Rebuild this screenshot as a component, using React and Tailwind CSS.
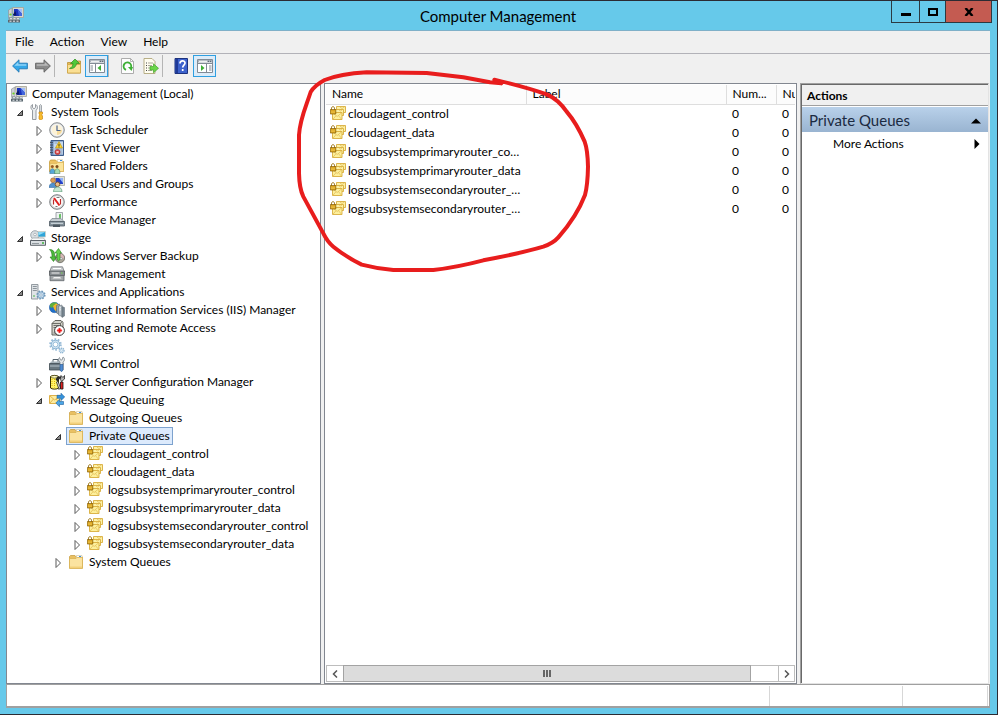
import { useState } from "react";

const Svg = ({ children }) => (
  <svg viewBox="0 0 16 16" className="size-4 shrink-0" aria-hidden="true">
    {children}
  </svg>
);

const ComputerIcon = () => (
  <Svg>
    <path d="M4.5 0.5h11v10h-10z" fill="#d9d8cf" stroke="#a3a196" strokeWidth="0.8" />
    <path d="M6 2h8v7H6z" fill="#1a32bd" />
    <path d="M9.500 2H14v5z" fill="#a3bdf6" />
    <path d="M14 7v2h-3L9.500 2z" fill="#4467dc" />
    <path d="M0.500 3l3.500-2v9.500H0.500z" fill="#cdd0d3" stroke="#898f94" strokeWidth="0.6" />
    <circle cx="2.500" cy="7.500" r="1.100" fill="#6cd21f" />
    <path d="M5 7.500L7.500 4l1 4.500H5z" fill="#0d1a66" />
    <path d="M0.500 10.500h11V13H0.500z" fill="#8d979d" />
    <path d="M0 13h12v2.500H0z" fill="#59666e" />
    <path d="M2 11.700h2M5.500 11.700h2M9 11.700h2M1.500 14.200h2M5 14.200h2M8.500 14.200h2" stroke="#e8edef" />
  </Svg>
);

const ToolsIcon = () => (
  <Svg>
    <path d="M2.500 0.500v3L4 4.800l1.500-1.300v-3C8 1.500 8 5 6 6.200V15.500H2.500V6.200C0.500 5 0.300 1.500 2.500.5z" fill="#e9ecee" stroke="#8b9197" strokeWidth="0.9" />
    <path d="M10.500 0.500l1 1V8h-2V1.500z" fill="#d5d9dc" stroke="#838a8f" strokeWidth="0.7" />
    <path d="M9 8h3.500v2l-1 .8 1 .9V15l-1 .8H10L9 15v-3.300l1-.9-1-.8z" fill="#f8bc2c" stroke="#c27c09" strokeWidth="0.6" />
  </Svg>
);

const ClockIcon = () => (
  <Svg>
    <circle cx="8" cy="8" r="7.300" fill="#d9dbdd" stroke="#7f8386" strokeWidth="0.9" />
    <circle cx="8" cy="8" r="5.700" fill="#fdf3d8" stroke="#f7f7f7" strokeWidth="0.8" />
    <path d="M8 8h5A5 5 0 0 1 8 13z" fill="#f7dc9c" />
    <path d="M8 3.500v5h3.500" fill="none" stroke="#4d6690" strokeWidth="1.200" />
  </Svg>
);

const EventIcon = () => (
  <Svg>
    <path d="M2 0.500h12.500v15H2z" fill="#6488b8" stroke="#3d5c8b" />
    <path d="M4.500 1.500H14v13H4.500z" fill="#c6d9ef" />
    <path d="M1 2.500h3M1 5h3M1 7.500h3M1 10h3M1 12.500h3" stroke="#434d5c" strokeWidth="0.9" />
    <path d="M5.500 9h8M5.500 11h8M5.500 13h8M5.500 3h3" stroke="#6d89ac" strokeWidth="0.7" />
    <path d="M10 1.500L13.500 8h-7z" fill="#ffd52e" stroke="#b88b00" strokeWidth="0.6" />
    <path d="M10 3.800v2.400M10 6.600v.8" stroke="#222" strokeWidth="0.9" />
    <circle cx="8.500" cy="12" r="2.600" fill="#d64545" stroke="#9c2424" strokeWidth="0.5" />
    <path d="M7.400 10.900l2.200 2.200M9.600 10.900l-2.200 2.200" stroke="#fff" strokeWidth="0.8" />
  </Svg>
);

const SharedIcon = () => (
  <Svg>
    <path d="M0.500 3.500L1.500 2h5L8 3.500h6.500v10h-14z" fill="#eec262" stroke="#c49a37" strokeWidth="0.8" />
    <path d="M8.500 1.500h5v2.500h-5z" fill="#fff" stroke="#c2b584" strokeWidth="0.4" />
    <path d="M11 2.500h2" stroke="#3c8fe0" />
    <path d="M1 5.500h7l1-1h5.500v9H1z" fill="#fbe49b" stroke="#dcb65c" strokeWidth="0.7" />
    <circle cx="3.300" cy="8.500" r="1.500" fill="#9a5a22" />
    <circle cx="8" cy="8.500" r="1.500" fill="#7a4a1a" />
    <path d="M0.700 15.500c0-6.500 5.500-6.500 5.500 0z" fill="#57a8d8" stroke="#31688d" strokeWidth="0.5" />
    <path d="M5.500 15.500c0-6.500 5.500-6.500 5.500 0z" fill="#a5dbb1" stroke="#3d7a4f" strokeWidth="0.5" />
  </Svg>
);

const UsersIcon = () => (
  <Svg>
    <path d="M5 0.500h10.500v9H6z" fill="#e2e2da" stroke="#9e9f98" strokeWidth="0.7" />
    <path d="M6.500 2H14v6H6.500z" fill="#2440c8" />
    <path d="M10 2h4v5z" fill="#94b3f5" />
    <circle cx="4" cy="4.300" r="2.400" fill="#dc9c54" stroke="#95602c" strokeWidth="0.6" />
    <path d="M0 11.500c0-6 8-6 8 0z" fill="#4f91d0" stroke="#2f6092" strokeWidth="0.5" />
    <circle cx="8.500" cy="8.300" r="2.300" fill="#e8bd85" stroke="#74471d" strokeWidth="0.8" />
    <path d="M4.500 15.800c0-6.500 8.500-6.500 8.500 0z" fill="#c5e5d1" stroke="#5a9a76" strokeWidth="0.7" />
  </Svg>
);

const PerformanceIcon = () => (
  <Svg>
    <circle cx="8" cy="8" r="7.300" fill="#d5d6d7" stroke="#6f7376" strokeWidth="0.9" />
    <circle cx="8" cy="8" r="5.800" fill="#fff" />
    <path d="M4.500 10.500V5.500M11.500 10.500V5" stroke="#b92a2a" strokeWidth="1.200" />
    <path d="M5 4l5.500 7.500" stroke="#e02020" strokeWidth="2" />
    <path d="M7.500 3.500h3M6.500 12.500h2" stroke="#555" strokeWidth="0.8" />
  </Svg>
);

const DeviceIcon = () => (
  <Svg>
    <path d="M7 0.500h6.500v7H7z" fill="#eef1f2" stroke="#8b9398" strokeWidth="0.8" />
    <path d="M10 2.500l1.800-.8v4l-1.500 1" fill="#4cb749" />
    <path d="M3 6.500h9l3 3H0.500z" fill="#c3cbd0" stroke="#78828a" strokeWidth="0.7" />
    <path d="M0.500 9.500h15V14H0.500z" fill="#83919a" stroke="#505c65" strokeWidth="0.8" />
    <path d="M2 11.300h12" stroke="#d6dfe4" />
    <path d="M4 12.500h7V15H4z" fill="#4c5861" />
  </Svg>
);

const StorageIcon = () => (
  <Svg>
    <circle cx="5" cy="5" r="4.300" fill="#d9dfe3" stroke="#8d979e" strokeWidth="0.8" />
    <circle cx="5" cy="4.500" r="1.300" fill="#fff" stroke="#8d979e" strokeWidth="0.6" />
    <path d="M8 1.500h7.500V7H8z" fill="#2fa4d8" stroke="#d0d0c8" strokeWidth="0.8" />
    <path d="M8.500 2l6.500.2-6.500 3z" fill="#8fdcf7" />
    <path d="M2.500 8h11l2 2.500H0.500z" fill="#f8f9fa" stroke="#8c9398" strokeWidth="0.6" />
    <path d="M0.500 10.500h15v4.800H0.500z" fill="#dadfe2" stroke="#4f565c" strokeWidth="0.9" />
    <path d="M2 13.500h7" stroke="#7d878d" strokeWidth="0.8" />
    <path d="M12 13h2" stroke="#3bb33b" strokeWidth="1.300" />
  </Svg>
);

const BackupIcon = () => (
  <Svg>
    <circle cx="11" cy="10" r="4.700" fill="#a9a598" stroke="#686860" strokeWidth="0.8" />
    <path d="M11 5.500a4.500 4.500 0 0 1 4 5l-4-.5z" fill="#d8b5b6" />
    <circle cx="12" cy="10.500" r="1.200" fill="#eee" stroke="#777" strokeWidth="0.5" />
    <path d="M0.500 1.500C4 1.500 5.500 3.500 5.500 6v3h2L4.500 13.500 1 9h2c0-3 0-5-2.500-7.500z" fill="#4cba3c" stroke="#267a1c" strokeWidth="0.6" />
    <path d="M6 5l3.500-4.500L12.500 5H11v4c0 2 0 3-1.500 4C8 12 8 11 8 9V5z" fill="#66d44e" stroke="#267a1c" strokeWidth="0.6" />
  </Svg>
);

const DiskIcon = () => (
  <Svg>
    <path d="M2.500 0.800h11L15.500 6H0.500z" fill="#c9cccf" stroke="#75797c" strokeWidth="0.8" />
    <path d="M4 2.500h8" stroke="#fff" />
    <path d="M0.500 5h15v4.500H0.500z" fill="#868b8f" stroke="#54595c" strokeWidth="0.8" />
    <path d="M2.500 7h8" stroke="#eee" />
    <path d="M12 7h1.500" stroke="#73d94f" />
    <path d="M1 9.500h14v5.200H1z" fill="#a0a4a7" stroke="#606569" strokeWidth="0.8" />
    <path d="M3.500 12.500L5 11h6l1.500 1.500z" fill="#f2f2f2" />
  </Svg>
);

const ServicesAppsIcon = () => (
  <Svg>
    <path d="M1.500 0.500h6.500V15H1.500z" fill="#dfe3e6" stroke="#8a9299" strokeWidth="0.9" />
    <path d="M2.800 2.500h4M2.800 4.500h4M2.800 6.500h4" stroke="#8b949b" />
    <path d="M3 12h2" stroke="#48b848" />
    <circle cx="11" cy="11" r="3.800" fill="#b4d0e6" stroke="#6d94b5" strokeWidth="1.600" strokeDasharray="1.600 1.380" />
    <circle cx="11" cy="11" r="3" fill="#c7ddee" stroke="#7fa6c6" strokeWidth="0.8" />
    <circle cx="11" cy="11" r="1.200" fill="#fff" stroke="#6d94b5" strokeWidth="0.6" />
  </Svg>
);

const IisIcon = () => (
  <Svg>
    <circle cx="5.500" cy="5.500" r="5.200" fill="#1f6fca" stroke="#275c9d" strokeWidth="0.5" />
    <path d="M1 2.500C3 0 6 .3 8 .8L7 3.500 4.500 4 3 6 1 5z" fill="#5fae3a" />
    <path d="M4 4l3-2.500 3 1L8.500 5 7 9.500 5 7z" fill="#f0b429" />
    <path d="M7.500 3.500l3-1.500v10.500l-3-1.500z" fill="#9aa6b0" stroke="#59646e" strokeWidth="0.6" />
    <path d="M9.500 4l3.500-1v11.500L9.500 13z" fill="#b6c1c9" stroke="#6b757d" strokeWidth="0.6" />
    <path d="M13 4.500l2.500 1V14L13 15.500z" fill="#76848f" stroke="#5a656e" strokeWidth="0.5" />
    <path d="M10.300 6l1.700-.3M10.300 8l1.700-.2" stroke="#fff" strokeWidth="0.8" />
  </Svg>
);

const RoutingIcon = () => (
  <Svg>
    <path d="M3 3.500l3-3h6l2 2v6.500l-4 6H3z" fill="#d4d4cc" stroke="#55554f" strokeWidth="0.9" />
    <path d="M3 3.500h8.500L13.500 1M11.500 3.500V7" fill="none" stroke="#55554f" strokeWidth="0.8" />
    <path d="M4.500 5.500h5M4.500 7.500h3M4.500 13h2" stroke="#555" strokeWidth="0.8" />
    <circle cx="10.500" cy="10.500" r="4.900" fill="#fff" stroke="#222" strokeWidth="0.9" />
    <path d="M9.800 8.300h1.400v1.500h1.500v1.400h-1.500v1.500H9.800v-1.500H8.300V9.800h1.500z" fill="#f01414" stroke="#f01414" strokeWidth="0.5" />
  </Svg>
);

const ServicesIcon = () => (
  <Svg>
    <circle cx="6.500" cy="6.500" r="5.300" fill="none" stroke="#9bbdd8" strokeWidth="2" strokeDasharray="1.700 1.630" />
    <circle cx="6.500" cy="6.500" r="4.300" fill="#d5e7f4" stroke="#87b2d2" />
    <circle cx="6.500" cy="6.500" r="2.400" fill="#fff" stroke="#87b2d2" strokeWidth="0.8" />
    <circle cx="12.700" cy="12.500" r="2.300" fill="#e0edf7" stroke="#8fb5d2" strokeWidth="1.400" strokeDasharray="1.200 0.600" />
    <circle cx="12.700" cy="12.500" r="0.9" fill="#fff" stroke="#87b2d2" strokeWidth="0.5" />
  </Svg>
);

const WmiIcon = () => (
  <Svg>
    <path d="M4 6V3.500h5V6" fill="none" stroke="#52606b" />
    <path d="M2 5.500h11l2 2.500H0.500z" fill="#a7b3bb" />
    <path d="M0.500 7.500H14V14H0.500z" fill="#697780" stroke="#3f4a52" strokeWidth="0.8" />
    <path d="M1 10h12" stroke="#b9c5cc" />
    <path d="M10.500 1.500l1 2.500H13l1-3C16 2 16 5 14 6v3h-3V6c-2-1-2-3-.5-4.500z" fill="#e3e7ea" stroke="#717b82" strokeWidth="0.7" />
    <path d="M11 8.500h3V14l-1.500 1.800L11 14z" fill="#4f8bd0" stroke="#2b5a93" strokeWidth="0.6" />
  </Svg>
);

const SqlIcon = () => (
  <Svg>
    <path d="M1.500 2.500C3 1 8 1 9.500 2.500V14c-1 1.500-7 1.500-8 0z" fill="#fff46b" stroke="#3a3200" />
    <ellipse cx="5.500" cy="2.800" rx="3.600" ry="1.300" fill="#fffbc4" stroke="#3a3200" strokeWidth="0.6" />
    <path d="M3 5v8.500M5.500 5v8.500" stroke="#e0b400" strokeDasharray="1 1" />
    <path d="M6.500 5.500l2-3h4v2H11L8.500 7.500z" fill="#2a2a2a" />
    <path d="M12 1.500l2 2 1.500-2V5l-3 2.500-1-2z" fill="#b5b5b5" stroke="#111" strokeWidth="0.7" />
    <path d="M7.500 8L9 7l2.500 7-1.500 1.500z" fill="#ddd" stroke="#111" strokeWidth="0.7" />
    <path d="M11.500 8H14v7h-2.500z" fill="#e02020" stroke="#111" strokeWidth="0.8" />
  </Svg>
);

const MessageIcon = () => (
  <Svg>
    <path d="M0.500 3.500h10.500v8H0.500z" fill="#fdeca0" stroke="#dba93a" strokeWidth="0.9" />
    <path d="M1 4l4.700 4L10.500 4M1 11l3.500-4M10.500 11L7 7" fill="none" stroke="#dba93a" strokeWidth="0.8" />
    <path d="M8 3.300h4V1.200L15.700 5 12 8.500V6.300H8z" fill="#3593dc" stroke="#1c5f9d" strokeWidth="0.6" />
    <path d="M14.500 9.500h-4V7.300L6.800 11l3.700 3.700v-2.200h4z" fill="#4aa5e6" stroke="#1c5f9d" strokeWidth="0.6" />
  </Svg>
);

const FolderIcon = () => (
  <Svg>
    <path d="M1.500 2.500l1-1h4.500L8 3h6.500v11h-13z" fill="#e9c062" stroke="#c9a047" strokeWidth="0.8" />
    <path d="M8.500 1.500H14v3H8.500z" fill="#fff" stroke="#c2b584" strokeWidth="0.5" />
    <path d="M11 2.500h2" stroke="#3c8fe0" />
    <path d="M1.500 4.500H8l1-1h5.500v11h-13z" fill="#fbe3a0" stroke="#d9b254" strokeWidth="0.8" />
    <path d="M2 12.500h12V14H2z" fill="#f3d07a" />
  </Svg>
);

const QueueIcon = () => (
  <Svg>
    <path d="M6.500 0.500h9v6h-9z" fill="#fdf2a6" stroke="#d8ad3c" strokeWidth="0.9" />
    <path d="M4.500 3.500h9v6h-9z" fill="#fdf2a6" stroke="#d8ad3c" strokeWidth="0.9" />
    <path d="M2.500 6.500H12v7H2.500z" fill="#fdf09c" stroke="#d8ad3c" strokeWidth="0.9" />
    <path d="M3 7l4.200 3.500L11.500 7M3 13.200l3-3.500M11.500 13.200l-3-3.500M8.500 3.500l2 1.500 2-1.500M10 1l2 1.500L14.500 1" fill="none" stroke="#dfb850" strokeWidth="0.7" />
    <path d="M1.500 4V2.200c0-2 3-2 3 0V4" fill="none" stroke="#9c7413" />
    <path d="M0.300 3.500h5.500V8H0.300z" fill="#d49c16" stroke="#85600b" strokeWidth="0.7" />
    <path d="M1 5.200h4M1 6.700h4" stroke="#f8d560" strokeWidth="0.6" />
  </Svg>
);

const BackIcon = () => (
  <Svg>
    <path d="M0.600 8L7 1.800v3.400h8.400v5.600H7v3.400z" fill="#33a7e8" stroke="#2478b4" strokeWidth="0.9" strokeLinejoin="round" />
    <path d="M2.300 7.700l4-3.800v2.300h8v1.500z" fill="#8ed4f7" />
  </Svg>
);

const ForwardIcon = () => (
  <Svg>
    <path d="M15.400 8L9 1.800v3.400H0.600v5.600H9v3.400z" fill="#8a8a8a" stroke="#606060" strokeWidth="0.9" strokeLinejoin="round" />
    <path d="M13.700 7.700l-4-3.800v2.300h-8v1.500z" fill="#b9b9b9" />
  </Svg>
);

const UpFolderIcon = () => (
  <Svg>
    <path d="M1.500 4.500h5l1-1.500h7v12h-13z" fill="#e8bd58" stroke="#b98f35" strokeWidth="0.8" />
    <path d="M1.500 6.500h13V15h-13z" fill="#fadf94" stroke="#cfa648" strokeWidth="0.8" />
    <path d="M3.500 10.500C6 9.500 7 7.500 7 5.500H4.500L9 1l4.500 4.500h-3c-.5 3.500-3 5.500-7 5z" fill="#4fc93a" stroke="#2c8c20" strokeWidth="0.7" />
  </Svg>
);

const PaneIcon = ({ flip }) => (
  <Svg>
    <path d="M0.500 1.500h15v13H0.500z" fill="#fff" stroke="#828b95" />
    <path d="M1 2h14v2.500H1z" fill="#a9b2bb" />
    <path d="M2 3.300h8" stroke="#fff" />
    <path d="M11 3.300h1M13 3.300h1" stroke="#4f5964" />
    <path d="M1 5.500h14" stroke="#828b95" />
    {flip ? (
      <>
        <path d="M9.500 6v8M12 8h2.500M12 10h2.500M12 12h2.500" stroke="#828b95" />
        <path d="M4 7v6l3.500-3z" fill="#3daf34" />
      </>
    ) : (
      <>
        <path d="M6.500 6v8M1.500 8H4M1.500 10H4M1.500 12H4" stroke="#828b95" />
        <path d="M12 7v6l-3.500-3z" fill="#3daf34" />
      </>
    )}
  </Svg>
);

const RefreshIcon = () => (
  <Svg>
    <path d="M1.500 0.500h9l3 3v12h-12z" fill="#fdfdfd" stroke="#a3a3a3" strokeWidth="0.9" />
    <path d="M10.500 0.500v3h3" fill="none" stroke="#a3a3a3" strokeWidth="0.8" />
    <path d="M6 11.800A3.800 3.800 0 1 1 11 9.500" fill="none" stroke="#3daf34" strokeWidth="1.900" />
    <path d="M8 9h5l-1.500 4z" fill="#3daf34" />
  </Svg>
);

const ExportIcon = () => (
  <Svg>
    <path d="M1 0.500h8l3 3v12H1z" fill="#fffdf0" stroke="#b0a67a" strokeWidth="0.9" />
    <path d="M3 5h1M3 7.500h1M3 10h1M3 12.500h1" stroke="#444" />
    <path d="M5 5h5M5 7.500h4M5 10h3M5 12.500h4" stroke="#a29f92" strokeWidth="0.9" />
    <path d="M7 8.500h3.500V5.800l5 4.500-5 4.500V12H7z" fill="#6bd648" stroke="#46a52d" strokeWidth="0.7" />
  </Svg>
);

const HelpIcon = () => (
  <Svg>
    <path d="M1 0.500h12.500v15H1z" fill="#3d62cc" stroke="#1c327e" />
    <path d="M1.500 1H4v14H1.500z" fill="#1f3a97" />
    <path d="M6 5.500c0-3.500 5-3.500 5-.4 0 2-2.300 2-2.300 4.400M8.700 11v2" fill="none" stroke="#fff" strokeWidth="1.700" />
  </Svg>
);

const queueNames = [
  "cloudagent_control",
  "cloudagent_data",
  "logsubsystemprimaryrouter_control",
  "logsubsystemprimaryrouter_data",
  "logsubsystemsecondaryrouter_control",
  "logsubsystemsecondaryrouter_data",
];

const tree = [
  {
    label: "System Tools",
    icon: ToolsIcon,
    open: true,
    children: [
      { label: "Task Scheduler", icon: ClockIcon, children: [] },
      { label: "Event Viewer", icon: EventIcon, children: [] },
      { label: "Shared Folders", icon: SharedIcon, children: [] },
      { label: "Local Users and Groups", icon: UsersIcon, children: [] },
      { label: "Performance", icon: PerformanceIcon, children: [] },
      { label: "Device Manager", icon: DeviceIcon },
    ],
  },
  {
    label: "Storage",
    icon: StorageIcon,
    open: true,
    children: [
      { label: "Windows Server Backup", icon: BackupIcon, children: [] },
      { label: "Disk Management", icon: DiskIcon },
    ],
  },
  {
    label: "Services and Applications",
    icon: ServicesAppsIcon,
    open: true,
    children: [
      { label: "Internet Information Services (IIS) Manager", icon: IisIcon, children: [] },
      { label: "Routing and Remote Access", icon: RoutingIcon, children: [] },
      { label: "Services", icon: ServicesIcon },
      { label: "WMI Control", icon: WmiIcon },
      { label: "SQL Server Configuration Manager", icon: SqlIcon, children: [] },
      {
        label: "Message Queuing",
        icon: MessageIcon,
        open: true,
        children: [
          { label: "Outgoing Queues", icon: FolderIcon },
          {
            label: "Private Queues",
            icon: FolderIcon,
            open: true,
            children: queueNames.map((label) => ({ label, icon: QueueIcon, children: [] })),
          },
          { label: "System Queues", icon: FolderIcon, children: [] },
        ],
      },
    ],
  },
];

const TreeNode = ({ node, selected, onSelect }) => {
  const [open, setOpen] = useState(Boolean(node.open));
  const Icon = node.icon;
  const isSelected = selected === node.label;

  return (
    <li>
      <div className="flex h-[18px] items-center">
        <span className="flex w-[13px] shrink-0">
          {node.children && (
            <button aria-label={`Toggle ${node.label}`} onClick={() => setOpen(!open)}>
              <svg viewBox="0 0 10 12" className="h-3 w-2.5">
                {open ? (
                  <path d="M7.500 4.500v5H2.500z" fill="#8a8a8a" stroke="#333" />
                ) : (
                  <path d="M3 2.500v9L7.500 7z" fill="#fff" stroke="#5a5a5a" />
                )}
              </svg>
            </button>
          )}
        </span>
        <button
          onClick={() => onSelect(node.label)}
          className={`flex h-[18px] items-center gap-[5px] border pr-0.5 pl-px whitespace-nowrap ${
            isSelected ? "border-[#7da2ce] bg-[#dceafc]" : "border-transparent"
          }`}
        >
          <Icon />
          {node.label}
        </button>
      </div>
      {open && node.children && node.children.length > 0 && (
        <ul className="pl-[19px]">
          {node.children.map((child) => (
            <TreeNode key={child.label} node={child} selected={selected} onSelect={onSelect} />
          ))}
        </ul>
      )}
    </li>
  );
};

const TitleBar = () => (
  <header className="flex h-[29px] items-start">
    <div className="flex w-[99px] pt-1.5 pl-0.5">
      <ComputerIcon />
    </div>
    <h1 className="flex-1 pt-1 text-center text-[15px] leading-[22px]">Computer Management</h1>
    <div className="-mr-0.5 flex h-[22px] border-x border-b border-[#2b3a42]">
      <button aria-label="Minimize" className="flex w-[27px] items-center justify-center">
        <span className="mt-1.5 h-[3px] w-2.5 bg-black" />
      </button>
      <button aria-label="Maximize" className="flex w-[26px] items-center justify-center border-l border-[#2b3a42]">
        <span className="h-2 w-2.5 border-2 border-black" />
      </button>
      <button aria-label="Close" className="flex w-[46px] items-center justify-center border-l border-[#2b3a42] bg-[#c45b51]">
        <svg viewBox="0 0 10 8" className="h-2 w-2.5">
          <path d="M1.500 0l7 8M8.500 0l-7 8" stroke="#000" strokeWidth="2.400" />
        </svg>
      </button>
    </div>
  </header>
);

const Separator = () => <span className="mr-[7px] h-[22px] w-px bg-[#b5b5b5]" />;

const ToolButton = ({ label, active, children }) => (
  <button
    aria-label={label}
    className={`flex h-[22px] w-[23px] items-center justify-center border ${
      active ? "border-[#2f9fe0] bg-[#dcecf9]" : "border-transparent"
    }`}
  >
    {children}
  </button>
);

const Toolbar = () => (
  <div className="flex h-[29px] items-start pt-px pl-0.5">
    <ToolButton label="Back"><BackIcon /></ToolButton>
    <ToolButton label="Forward"><ForwardIcon /></ToolButton>
    <Separator />
    <ToolButton label="Up one level"><UpFolderIcon /></ToolButton>
    <ToolButton label="Show or hide console tree" active><PaneIcon /></ToolButton>
    <Separator />
    <ToolButton label="Refresh"><RefreshIcon /></ToolButton>
    <ToolButton label="Export list"><ExportIcon /></ToolButton>
    <Separator />
    <ToolButton label="Help"><HelpIcon /></ToolButton>
    <ToolButton label="Show or hide action pane" active><PaneIcon flip /></ToolButton>
  </div>
);

const QueueTable = () => (
  <div className="flex-1 overflow-hidden">
    <table className="w-[500px] table-fixed border-collapse text-left">
      <colgroup>
        <col className="w-[200px]" />
        <col className="w-[200px]" />
        <col className="w-[50px]" />
        <col className="w-[50px]" />
      </colgroup>
      <thead>
        <tr className="h-[19px] bg-[#fcfcfc]">
          {["Name", "Label", "Num...", "Nu"].map((name) => (
            <th
              key={name}
              className="overflow-hidden border-r border-b border-[#dedede] p-0 pl-1.5 font-normal"
            >
              {name}
            </th>
          ))}
        </tr>
      </thead>
      <tbody>
        {queueNames.map((name) => (
          <tr key={name} className="h-[19px]">
            <td className="p-0 pr-1 pl-1">
              <div className="flex items-center gap-0.5">
                <QueueIcon />
                <span className="truncate">{name}</span>
              </div>
            </td>
            <td className="p-0" />
            <td className="p-0 pl-1.5">0</td>
            <td className="p-0 pl-1.5">0</td>
          </tr>
        ))}
      </tbody>
    </table>
  </div>
);

const ScrollBar = () => (
  <div className="flex h-[17px] border border-[#bdbdbd] bg-white">
    <button aria-label="Scroll left" className="flex w-4 items-center justify-center">
      <svg viewBox="0 0 6 8" className="h-2 w-1.5">
        <path d="M5 0.500L1.500 4 5 7.500" fill="none" stroke="#555" strokeWidth="1.500" />
      </svg>
    </button>
    <div className="-my-px flex flex-1">
      <div className="flex w-[408px] items-center justify-center gap-px border border-[#a3a3a3] bg-[#dcdcdc]">
        <span className="h-[7px] w-0.5 bg-[#666]" />
        <span className="h-[7px] w-0.5 bg-[#666]" />
        <span className="h-[7px] w-0.5 bg-[#666]" />
      </div>
    </div>
    <button aria-label="Scroll right" className="flex w-4 items-center justify-center border-l border-[#bdbdbd]">
      <svg viewBox="0 0 6 8" className="h-2 w-1.5">
        <path d="M1 0.500L4.500 4 1 7.500" fill="none" stroke="#555" strokeWidth="1.500" />
      </svg>
    </button>
  </div>
);

const ActionsPane = () => (
  <aside className="w-[189px] shrink-0 border border-t-[#a0a0a0] border-r-[#e3e3e3] border-b-[#e3e3e3] border-l-[#a0a0a0] bg-white">
    <div className="h-full border-t border-l border-[#696969]">
      <h2 className="h-[21px] border-b border-[#a0a0a0] bg-[#f0f0f0] pl-[5px] leading-[22px] font-bold">Actions</h2>
      <button className="mt-px flex h-[25px] w-full items-center justify-between bg-linear-to-b from-[#b9d1ea] to-[#99b4d1] px-[7px] pt-0.5 text-[15px] text-[#1b2a41]">
        Private Queues
        <svg viewBox="0 0 10 6" className="h-1.5 w-2.5">
          <path d="M5 0.500l5 5H0z" fill="#000" />
        </svg>
      </button>
      <button className="flex h-6 w-full items-center justify-between pr-2 pl-[31px]">
        More Actions
        <svg viewBox="0 0 6 10" className="h-2.5 w-1.5">
          <path d="M0.500 0l5 5-5 5z" fill="#000" />
        </svg>
      </button>
    </div>
  </aside>
);

// Hand-drawn marker loop around the list of queues
const Marker = () => (
  <svg viewBox="0 0 930 660" className="pointer-events-none absolute top-[59px] left-[290px] h-[220px] w-[310px]">
    <path
      d="M634 70L600 67L520 52L410 39L230 37Q150 42 104 60Q74 76 62 96C48 140 30 175 27 225V340Q28 385 40 410L100 520Q112 545 130 560Q170 592 215 614Q260 626 310 630H430Q500 622 580 601Q700 578 760 560Q790 549 805 532Q860 470 885 405Q893 375 894 320Q893 270 884 245Q860 190 830 155Q805 118 770 103Q710 82 613 59L634 70"
      fill="none"
      stroke="#e81d1d"
      strokeWidth="12"
      strokeLinecap="round"
      strokeLinejoin="round"
    />
  </svg>
);

const App = () => {
  const [selected, setSelected] = useState("Private Queues");

  return (
    <div className="relative flex min-h-screen flex-col border-t border-r border-b border-[#2b2b33] bg-[#66c9ea] pr-[7px] pb-1.5 pl-1.5 font-[Lato,sans-serif] text-xs text-black">
      <TitleBar />
      <main className="flex flex-1 flex-col border-t border-[#7fb0c8] bg-[#f0f0f0]">
        <nav className="flex h-[23px] items-center gap-4 border-b border-[#b2b2b8] pl-[9px]">
          {["File", "Action", "View", "Help"].map((item) => (
            <button key={item}>{item}</button>
          ))}
        </nav>
        <Toolbar />
        <div className="flex flex-1 gap-[3px] pr-px">
          <section className="w-[315px] shrink-0 border border-[#828790] bg-white pt-px">
            <button className="flex h-[18px] items-center gap-[5px] pl-1">
              <ComputerIcon />
              Computer Management (Local)
            </button>
            <ul className="pl-2">
              {tree.map((node) => (
                <TreeNode key={node.label} node={node} selected={selected} onSelect={setSelected} />
              ))}
            </ul>
          </section>
          <section className="flex min-w-0 flex-1 flex-col border border-[#828790] bg-white p-px">
            <QueueTable />
            <ScrollBar />
          </section>
          <ActionsPane />
        </div>
        <footer className="flex h-6 border border-b-2 border-[#a0a0a0] bg-white pt-px pr-px">
          <span className="flex-1" />
          <span className="w-[133px] border-l border-[#d7d7d7]" />
          <span className="w-[86px] border-x border-[#d7d7d7]" />
        </footer>
      </main>
      <Marker />
    </div>
  );
};

export default App;
